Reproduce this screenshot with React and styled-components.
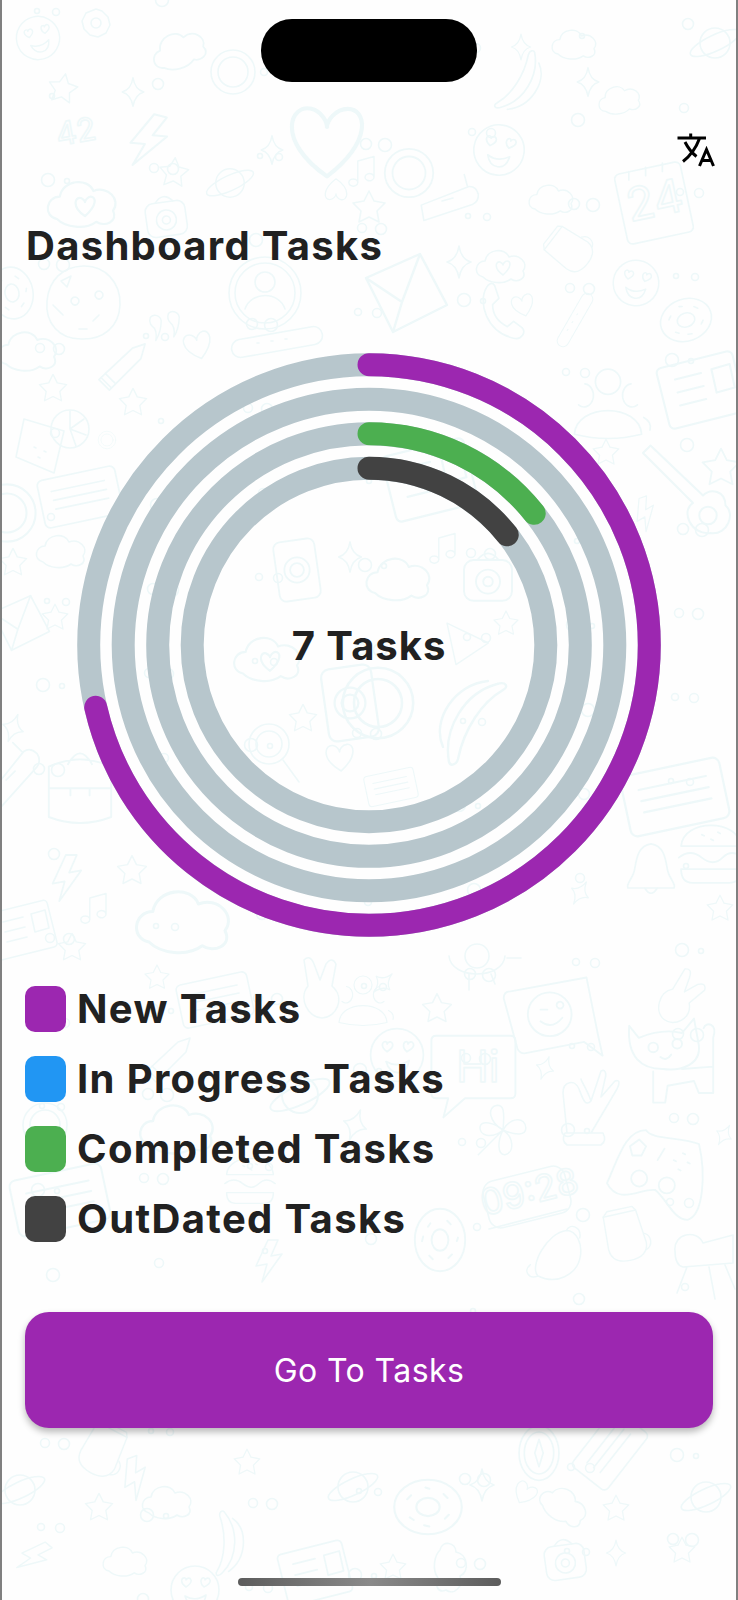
import React from 'react'
import styled, { createGlobalStyle } from 'styled-components'

const GlobalStyle = createGlobalStyle`
  html, body {
    margin: 0;
    padding: 0;
    background: #fefefe;
  }
  * {
    box-sizing: border-box;
  }
`

const Page = styled.div`
  position: relative;
  width: 738px;
  height: 1600px;
  overflow: hidden;
  display: flex;
  flex-direction: column;
  background: #fefefe;
  border-left: 2px solid #808080;
  border-right: 2px solid #808080;
  font-family: Inter, "Liberation Sans", sans-serif;
  color: #212121;
`

const DoodleLayer = styled.svg`
  position: absolute;
  top: 0;
  left: -2px;
  width: 738px;
  height: 1600px;
  fill: none;
  stroke: #eef8f9;
  stroke-width: 1.6;
  stroke-linecap: round;
  stroke-linejoin: round;
`

const Content = styled.div`
  position: relative;
  flex: 1;
  display: flex;
  flex-direction: column;
  padding: 19px 23px 14px;
`

const StatusBar = styled.div`
  display: flex;
  justify-content: center;
`

const Island = styled.div`
  width: 216px;
  height: 63px;
  border-radius: 31px;
  background: #000;
`

const TopBar = styled.div`
  display: flex;
  justify-content: flex-end;
  margin-top: 40px;
  height: 40px;
`

const TranslateButton = styled.svg`
  width: 70px;
  height: 60px;
  margin: -1px -17px 0 0;
  fill: none;
  stroke: #000;
  stroke-width: 3;
  stroke-linecap: butt;
`

const Title = styled.h1`
  margin: 60px 0 0 1px;
  font-size: 40px;
  line-height: 48px;
  font-weight: 700;
  letter-spacing: 1.3px;
`

const ChartWrap = styled.div`
  position: relative;
  align-self: center;
  width: 584px;
  height: 584px;
  margin-top: 83px;
`

const RingSvg = styled.svg`
  display: block;
  width: 100%;
  height: 100%;
  transform: rotate(-90deg);
`

const Track = styled.circle`
  fill: none;
  stroke: #b7c6cc;
  stroke-width: 23;
`

const Arc = styled.circle`
  fill: none;
  stroke: ${p => p.$color};
  stroke-width: 23;
  stroke-linecap: round;
`

const CenterLabel = styled.div`
  position: absolute;
  inset: 0;
  display: flex;
  align-items: center;
  justify-content: center;
  font-size: 40px;
  font-weight: 700;
  letter-spacing: 1px;
`

const Legend = styled.ul`
  list-style: none;
  margin: 49px 0 0;
  padding: 0;
  display: flex;
  flex-direction: column;
  gap: 24px;
`

const LegendRow = styled.li`
  display: flex;
  align-items: center;
  gap: 11px;
`

const Swatch = styled.span`
  width: 41px;
  height: 46px;
  border-radius: 10px;
  background: ${p => p.$color};
`

const LegendText = styled.span`
  font-size: 40px;
  line-height: 46px;
  font-weight: 700;
  letter-spacing: 1.35px;
`

const GoButton = styled.button`
  display: block;
  width: 100%;
  height: 116px;
  margin-top: 70px;
  border: none;
  border-radius: 24px;
  background: #9c27b0;
  color: #fff;
  font-family: Inter, "Liberation Sans", sans-serif;
  font-size: 32px;
  font-weight: 400;
  letter-spacing: 0.4px;
  box-shadow: 0 4px 7px rgba(0, 0, 0, 0.28);
`

const HomeIndicator = styled.div`
  align-self: center;
  width: 263px;
  height: 8px;
  margin-top: auto;
  border-radius: 4px;
  background: linear-gradient(90deg, #5c5c5c, #8a8a8a 50%, #5c5c5c);
`

const SHAPES = {
  star: <path d="M0-16 5-6 16-4 8 4 10 15 0 10-10 15-8 4-16-4-5-6Z" />,
  sparkle: <path d="M0-16Q2-3 12 0 2 3 0 16-2 3-12 0-2-3 0-16Z" />,
  heart: <path d="M0 14C-20 0-14-14-6-12-2-11 0-7 0-5 0-7 3-12 8-12 15-12 18 0 0 14Z" />,
  cloud: <path d="M-20 10C-30 8-28-6-18-6-16-18 2-20 6-10 16-14 26-4 20 4 24 12 14 16 8 12 0 18-14 16-20 10Z" />,
  cloudHeart: (
    <>
      <path d="M-20 10C-30 8-28-6-18-6-16-18 2-20 6-10 16-14 26-4 20 4 24 12 14 16 8 12 0 18-14 16-20 10Z" />
      <path d="M0 8C-10 1-7-6-3-5-1-4 0-3 0-2 0-3 2-6 4-6 8-6 9 0 0 8Z" />
    </>
  ),
  face: (
    <>
      <circle r="24" />
      <path d="M-9-3C-16-8-13-13-10-12-9-12-9-11-9-10-8-12-5-13-4-10-3-7-6-5-9-3ZM9-3C4-7 6-13 9-12 10-12 10-11 10-10 11-12 14-13 15-10 16-7 13-5 9-3ZM-10 6Q0 12 11 5 9 16 1 16-7 16-10 6Z" />
    </>
  ),
  planet: (
    <>
      <circle r="15" />
      <ellipse rx="27" ry="8" transform="rotate(-25)" />
    </>
  ),
  donut: (
    <>
      <ellipse rx="26" ry="21" />
      <ellipse rx="9" ry="7" />
      <path d="M-16-6-13-9M12-10 15-7M-14 8-11 10M13 9 16 6M-2-15 1-14M-3 14 1 15" />
    </>
  ),
  camera: (
    <>
      <rect x="-20" y="-15" width="40" height="34" rx="8" />
      <circle cy="3" r="10" />
      <circle cy="3" r="4" />
      <path d="M-9-15Q0-26 9-15" />
    </>
  ),
  banana: <path d="M14-28C18-6 4 18-18 24-24 26-26 22-22 20-8 12 4-6 8-26 9-30 13-31 14-28ZM18-18C26 0 10 24-12 26" />,
  envelope: (
    <>
      <path d="M-26-10 10-26 28 8-8 26Z" />
      <path d="M-26-10-2 6 10-26M-2 6-8 26" />
    </>
  ),
  music: <path d="M-8 14V-10L10-15V8M-8 14A5 4 0 1 1-8 13.9M10 8A5 4 0 1 1 10 7.9" />,
  pencil: <path d="M-22 12 10-18 22-22 18-8-12 22ZM-16 6-6 16M-20 10-10 20" />,
  bolt: <path d="M-2-20-14 6-3 4-8 22 12-6 1-4 8-20Z" />,
  ring: (
    <>
      <circle r="22" />
      <circle r="15" />
    </>
  ),
  person: (
    <>
      <circle r="36" />
      <circle r="30" />
      <circle cy="-11" r="10" />
      <path d="M-20 16C-14-2 14-2 20 16" />
    </>
  ),
  cookie: (
    <>
      <path d="M0-37C22-38 38-20 37 2 36 24 20 37-2 36-24 36-38 20-36-2-34-24-20-36 0-37Z" />
      <path d="M-22-22-12-27-16-16ZM12-8A4 4 0 1 1 12-7.9M-12-2A4 4 0 1 1-12-1.9M16 12 10 18M-4 26 4 26M-30 2-20 12" />
    </>
  ),
  card: (
    <>
      <rect x="-36" y="-22" width="72" height="44" rx="5" transform="rotate(-12)" />
      <path d="M-26-5 22-15M-24 3 24-7M-22 11 26 1" />
    </>
  ),
  paper: (
    <>
      <rect x="-30" y="-24" width="60" height="48" rx="4" transform="rotate(-14)" />
      <path d="M-20-8 0-13M-18 2 2-3M-16 12 4 7M8-16 22-20 26-2 12 2Z" />
    </>
  ),
  calendar: (
    <>
      <rect x="-32" y="-34" width="64" height="68" rx="5" transform="rotate(-12)" />
      <path d="M-24-22V-30M-8-26V-34M8-30V-38" />
    </>
  ),
  burger: (
    <>
      <path d="M-26-6C-24-30 24-30 26-6ZM-28 4Q-18-4-8 4T10 4 28 4M-26 14H26Q26 26 16 26H-16Q-26 26-26 14Z" />
      <path d="M-8-16-6-15M6-18 8-17M0-12 2-11" />
    </>
  ),
  bell: <path d="M0-22C-14-20-14-4-16 4-18 12-24 16-22 20H22C24 16 18 12 16 4 14-4 14-20 0-22ZM-6 20Q0 30 6 20" />,
  lens: (
    <>
      <circle cx="-4" cy="-6" r="20" />
      <circle cx="-4" cy="-6" r="13" />
      <path d="M10 10 26 32" />
    </>
  ),
  phone: <path d="M-14-24C-22-10-14 18 12 24 20 26 24 18 20 14L12 8 6 13C-4 8-8 0-8-8L-2-14-6-26C-8-30-12-28-14-24Z" />,
  bag: <path d="M-26-22Q0-34 26-22V20Q0 30-26 20ZM-26-4H26M-8-4V2M8-4V2M-10-24Q0-42 10-24" />,
  cat: (
    <>
      <path d="M-34-26-26-16Q-6-24 10-20L20-32 24-10C26 6 10 12-6 10-24 10-36 0-34-26ZM10 10 36 8V-16M36-16C40-28 30-30 28-24M36 8V30H24L20 20-2 24-4 38H-14L-14 12" />
      <circle cx="-14" cy="-8" r="4" />
      <circle cx="6" cy="-11" r="4" />
      <path d="M-8 0Q-3 4 1-2" />
    </>
  ),
  hand: <path d="M-20 30-24-10C-24-22-12-24-8-14-4-4-2 4 4-2 0-14-6-22-6-24M4-2 14-32C18-34 20-30 18-24L14-6 28-22C34-24 32-18 30-14L4 30M-22 30H16Q20 38 14 42H-20Q-26 38-22 30Z" />,
  clover: <path d="M0 0C-14-8-18-24-6-26 0-26 2-22 0 0ZM0 0C8-14 24-14 24-2 24 6 14 6 0 0ZM0 0C12 8 12 24 2 26-6 26-6 12 0 0ZM0 0C-12 10-26 6-24-4-22-10-10-8 0 0ZM0 0-26 26" />,
  gamepad: (
    <>
      <path d="M-40 14C-30-8-24-32-6-32-2-24 24-26 40-20 46 6 44 42 30 46 18 46 12 28 2 20-10 18-30 34-40 14Z" />
      <circle cx="-12" cy="10" r="7" />
      <circle cx="12" cy="16" r="7" />
      <path d="M-20-18-12-24-6-18-10-10-18-10ZM4-6 10-16M18-6 20-5M26-12 28-11M22 2 24 3M30-4 32-3" />
    </>
  ),
  clock: (
    <>
      <rect x="-42" y="-24" width="84" height="48" rx="12" transform="rotate(-14)" />
      <path d="M-38 32 40 12" />
    </>
  ),
  mug: (
    <>
      <path d="M-22-22 14-30 26 6Q28 22 8 26-12 30-16 14Z" />
      <path d="M-22-22-18-28 10-34 14-30M24-4A10 10 0 0 1 26 14" />
    </>
  ),
  croissant: <path d="M-20 20C-30 10-10-26 10-28 20-28 28-14 24 2 20 18 0 30-20 20ZM-20 20C-30 24-36 14-28 8M10-28C14-36 26-32 24-20" />,
  chair: <path d="M-28-2C-30-20-6-24 0-10L30-18V10L-20 14Q-28 12-28-2ZM-16 14-26 40M6 14 12 46M22 12 32 36" />,
  compass: (
    <>
      <ellipse rx="19" ry="26" />
      <ellipse rx="14" ry="20" />
      <path d="M0-13 4 0 0 13-4 0Z" />
    </>
  ),
  turtle: (
    <>
      <path d="M-28-14C-26 10 26 10 28-14M-8 4V20M14 4 18 14M30-12 44-12" />
      <circle cx="0" cy="-14" r="12" />
    </>
  ),
  drink: (
    <>
      <path d="M-24-24 16-12 6 30-32 14Z" />
      <circle cx="22" cy="-14" r="19" />
      <path d="M22-14V-32M22-14 36-24M22-14 38-8M22-14 28 3M-14 4-12 5M-4 8-2 9M-10 14-8 15" />
    </>
  ),
  bubble: (
    <>
      <path d="M-34-26H28Q32-26 32-22V22Q32 26 28 26H-10L-28 42-24 26H-34Q-38 26-38 22V-22Q-38-26-34-26Z" />
    </>
  ),
  emoji: (
    <>
      <path d="M-36-18 30-30 40 20 44 38 28 26-24 36Q-28 36-30 32L-42-12Q-42-18-36-18Z" />
      <circle cx="-2" cy="2" r="19" />
      <path d="M-10-2H-4M4-6A3 3 0 1 1 4-5.9M-10 8Q0 16 9 5" />
    </>
  ),
  bottle: <path d="M-14 26-24 14 8-26Q14-30 20-24 24-18 20-12ZM-8 0 0-8M6-26-2-34" />,
  people: (
    <>
      <circle cy="-24" r="12" />
      <path d="M-32 26C-30-4 30-4 32 26Q0 34-32 26Z" />
      <path d="M-28-2A9 11 0 1 0-22-22M28-2A9 11 0 1 1 22-22M34 10Q42 14 40 22" />
    </>
  ),
  guitar: (
    <>
      <path d="M-36-40-30-46 12-6C18-12 30-10 30 2 38 8 32 26 18 24 2 26-6 6 4 0Z" />
      <circle cx="16" cy="10" r="7" />
    </>
  ),
  flower: (
    <>
      <path d="M0-14 6-12 12-6 14 2 10 10 2 14-6 12-12 6-14-2-10-10Z" />
      <circle r="5" />
    </>
  ),
  watch: (
    <>
      <rect x="-18" y="-26" width="36" height="52" rx="6" transform="rotate(-8)" />
      <circle r="11" />
      <circle r="6" />
    </>
  ),
  bar: (
    <>
      <rect x="-46" y="-9" width="92" height="18" rx="9" transform="rotate(-10)" />
      <path d="M-20 1-18 1M-6-1-4-1M8-3 10-3" />
    </>
  ),
  quote: <path d="M-14-12A7 7 0 0 1-2-8Q-2 4-8 14-6 2-12-2-16-6-14-12ZM6-16A7 7 0 0 1 18-12Q18 0 12 10 14-2 8-6 4-10 6-16Z" />,
  trapeze: <path d="M-20-22 26 0-10 24Z" />,
  rabbit: <path d="M-14-4-18-30Q-12-36-8-26L-2-10 4-26Q10-34 14-26L10-4C24 8 14 28 0 28-14 28-24 8-14-4Z" />,
}

const PLACED = [
  ['face', 38, 38, 0.9, -15], ['flower', 96, 23, 1, 0], ['cloud', 181, 50, 1.1, -20], ['star', 63, 88, 0.9, 10], ['sparkle', 133, 92, 0.9, 0],
  ['ring', 233, 72, 1, 0], ['banana', 520, 82, 1.05, 0], ['cloud', 576, 45, 0.9, 0], ['sparkle', 521, 47, 0.8, 0], ['sparkle', 588, 82, 0.9, 0],
  ['cloud', 621, 100, 0.85, -10], ['planet', 715, 43, 1, 0], ['heart', 327, 140, 2.6, 0], ['ring', 409, 173, 1.1, 0], ['star', 174, 172, 0.9, 5],
  ['sparkle', 272, 150, 0.9, 0], ['planet', 230, 183, 0.95, 0], ['cloudHeart', 85, 205, 1.4, 0], ['camera', 166, 217, 1, -8], ['music', 365, 170, 0.9, 0],
  ['heart', 336, 190, 0.8, 180], ['star', 369, 207, 1, 0], ['face', 499, 150, 1.05, 8], ['bottle', 449, 205, 1, 30], ['calendar', 654, 203, 1.05, 0],
  ['cloud', 553, 200, 0.9, 0], ['bolt', 150, 140, 1.3, 15], ['mug', 569, 252, 0.8, -40], ['face', 636, 283, 0.95, 8], ['sparkle', 459, 262, 1, 0],
  ['cookie', 83, 303, 1, 0], ['donut', 12, 293, 1, 80], ['person', 265, 293, 1, 0], ['quote', 163, 328, 0.9, 0], ['heart', 198, 345, 1, -15],
  ['pencil', 122, 367, 1.05, 0], ['bar', 277, 342, 1, 0], ['cloud', 30, 352, 1.2, 0], ['star', 53, 388, 0.85, 0], ['star', 133, 402, 0.85, 0],
  ['drink', 48, 443, 1, 0], ['ring', 107, 440, 0.4, 0], ['card', 80, 497, 1.1, 0], ['cloud', 63, 552, 1, 0], ['star', 13, 562, 0.85, 0],
  ['watch', 297, 570, 1.15, 0], ['sparkle', 350, 557, 0.95, 0], ['ring', 7, 513, 1.3, 0], ['envelope', 405, 293, 1.5, 0], ['cloudHeart', 503, 267, 1, 0],
  ['phone', 501, 313, 1.05, 0], ['heart', 523, 305, 0.8, -15], ['donut', 686, 320, 1, -20], ['bar', 575, 320, 0.65, -50], ['people', 608, 407, 1.05, 0],
  ['paper', 701, 390, 1.3, 0], ['star', 606, 452, 0.8, 0], ['star', 721, 467, 1.15, 0], ['guitar', 688, 503, 1.25, 0], ['bolt', 646, 513, 0.8, -20],
  ['music', 446, 547, 0.9, 0], ['camera', 488, 578, 1.2, 0], ['cloud', 401, 580, 1.3, 0], ['paper', 430, 480, 1.4, 0], ['star', 506, 623, 0.75, 0],
  ['trapeze', 465, 643, 0.9, 0], ['card', 391, 787, 0.7, 0], ['card', 675, 797, 1.4, 0], ['burger', 711, 853, 1.15, 0], ['bell', 651, 867, 1.05, 0],
  ['sparkle', 580, 893, 0.8, 30], ['star', 720, 908, 0.8, 0], ['ring', 378, 703, 1.6, 0], ['banana', 470, 720, 1.5, 180], ['envelope', 20, 623, 1.05, 0],
  ['star', 55, 617, 0.8, 0], ['cloudHeart', 270, 660, 1.35, 0], ['star', 303, 718, 0.85, 0], ['lens', 273, 750, 1, 0], ['heart', 340, 757, 1, -5],
  ['watch', 350, 703, 1.4, 0], ['sparkle', 13, 728, 0.9, 20], ['bag', 80, 793, 1.2, 0], ['bolt', 68, 877, 1.1, 0], ['star', 132, 870, 0.9, 0],
  ['music', 97, 907, 0.9, 0], ['paper', 23, 930, 1, 0], ['cloud', 187, 923, 1.9, 0], ['star', 72, 947, 0.85, 0], ['bottle', 15, 780, 1.1, 0],
  ['rabbit', 322, 990, 1, 0], ['people', 363, 1003, 0.75, 0], ['sparkle', 383, 983, 0.8, 45], ['star', 437, 1008, 0.9, 0], ['star', 157, 977, 0.75, 0],
  ['card', 215, 1000, 1, 0], ['pencil', 168, 1060, 1, 0], ['face', 397, 1055, 1.1, 0], ['ring', 45, 1125, 1, 0], ['planet', 300, 1095, 1.2, 0],
  ['cloud', 180, 1130, 1.5, 0], ['sparkle', 355, 1125, 1, 20], ['card', 60, 1200, 1.3, 0], ['burger', 250, 1180, 0.9, 0], ['bolt', 270, 1260, 1, 0],
  ['turtle', 477, 970, 1, 0], ['emoji', 552, 1012, 1.15, 0], ['cat', 670, 1057, 1.2, 0], ['bubble', 477, 1067, 1.2, 0], ['hand', 587, 1103, 1, 0],
  ['clover', 503, 1130, 0.95, 0], ['gamepad', 653, 1167, 1.15, 0], ['clock', 527, 1197, 1, 0], ['mug', 623, 1237, 0.9, 0], ['croissant', 557, 1257, 0.95, 0],
  ['chair', 703, 1253, 1, 0], ['sparkle', 545, 1068, 0.75, 20], ['donut', 440, 1240, 1.2, 90], ['sparkle', 724, 1135, 0.7, 30], ['rabbit', 680, 1000, 0.9, 40],
  ['compass', 539, 1453, 1.05, 0], ['planet', 353, 1487, 1, 0], ['donut', 428, 1507, 1.3, 0], ['star', 99, 1507, 0.85, 0], ['cloud', 169, 1503, 1, 0],
  ['bolt', 136, 1477, 1, -20], ['star', 247, 1462, 0.8, 0], ['sparkle', 482, 1485, 1, 0], ['heart', 525, 1493, 0.8, 30], ['cloud', 565, 1507, 1, 30],
  ['star', 616, 1508, 0.8, 0], ['planet', 706, 1497, 1, 0], ['banana', 226, 1543, 1, -30], ['bolt', 35, 1557, 0.9, 40], ['cloud', 127, 1562, 0.9, 0],
  ['paper', 315, 1573, 1.1, 0], ['camera', 565, 1560, 1, -8], ['star', 682, 1550, 0.8, 0], ['sparkle', 616, 1553, 0.8, 0], ['star', 393, 1567, 0.8, 0],
  ['face', 195, 1590, 1, 0], ['cloud', 450, 1570, 1, 90], ['planet', 20, 1490, 1, 0], ['card', 610, 1450, 1, -40], ['mug', 100, 1450, 0.9, 40],
]

// small bubbles scattered between the drawings, a fixed sequence so every render is the same
const BUBBLES = Array.from({ length: 230 }, (_, i) => ({
  x: (i * 211 + 37) % 738,
  y: (i * 397 + 11) % 1600,
  r: 2.5 + ((i * 7) % 5),
}))

const LABELS = [
  ['42', 58, 146, 32, -10], ['24', 630, 222, 46, -12], ['Hi', 456, 1082, 44, 0], ['09:28', 484, 1216, 36, -14],
]

const RINGS = [
  { r: 280.3, color: '#9c27b0', value: 5 },
  { r: 245.8, color: '#2196f3', value: 0 },
  { r: 211.3, color: '#4caf50', value: 1 },
  { r: 176.8, color: '#424242', value: 1 },
]

const TOTAL = 7

const LEGEND = [
  { label: 'New Tasks', color: '#9c27b0' },
  { label: 'In Progress Tasks', color: '#2196f3' },
  { label: 'Completed Tasks', color: '#4caf50' },
  { label: 'OutDated Tasks', color: '#424242' },
]

const Doodles = () => (
  <DoodleLayer viewBox="0 0 738 1600">
    {BUBBLES.map((b, i) => (
      <circle key={i} cx={b.x} cy={b.y} r={b.r} />
    ))}
    {PLACED.map(([name, x, y, s, rot], i) => (
      <g key={i} transform={`translate(${x} ${y}) rotate(${rot}) scale(${s})`}>
        {SHAPES[name]}
      </g>
    ))}
    {LABELS.map(([text, x, y, size, rot]) => (
      <text
        key={text}
        x={x}
        y={y}
        fontSize={size}
        fontFamily="Inter, sans-serif"
        transform={`rotate(${rot} ${x} ${y})`}
      >
        {text}
      </text>
    ))}
  </DoodleLayer>
)

const RingChart = () => (
  <ChartWrap>
    <RingSvg viewBox="0 0 584 584">
      {RINGS.map(ring => (
        <Track key={ring.r} cx="292" cy="292" r={ring.r} />
      ))}
      {RINGS.filter(ring => ring.value > 0).map(ring => (
        <Arc
          key={ring.r}
          cx="292"
          cy="292"
          r={ring.r}
          $color={ring.color}
          pathLength={TOTAL}
          strokeDasharray={`${ring.value} ${TOTAL}`}
        />
      ))}
    </RingSvg>
    <CenterLabel>{TOTAL} Tasks</CenterLabel>
  </ChartWrap>
)

const App = () => {
  return (
    <Page>
      <GlobalStyle />
      <Doodles />
      <Content>
        <StatusBar>
          <Island />
        </StatusBar>
        <TopBar>
          <TranslateButton viewBox="0 0 70 60">
            <path d="M17.5 17H46M30.7 12.5V17M39.5 17.5C36 27 30 35 23 40.5M25 21C28 27 32 32 36.5 35.5M39.5 45 46.5 28.5 53.5 45M41.7 39.5H51.3" />
          </TranslateButton>
        </TopBar>
        <Title>Dashboard Tasks</Title>
        <RingChart />
        <Legend>
          {LEGEND.map(item => (
            <LegendRow key={item.label}>
              <Swatch $color={item.color} />
              <LegendText>{item.label}</LegendText>
            </LegendRow>
          ))}
        </Legend>
        <GoButton>Go To Tasks</GoButton>
        <HomeIndicator />
      </Content>
    </Page>
  )
}

export default App
